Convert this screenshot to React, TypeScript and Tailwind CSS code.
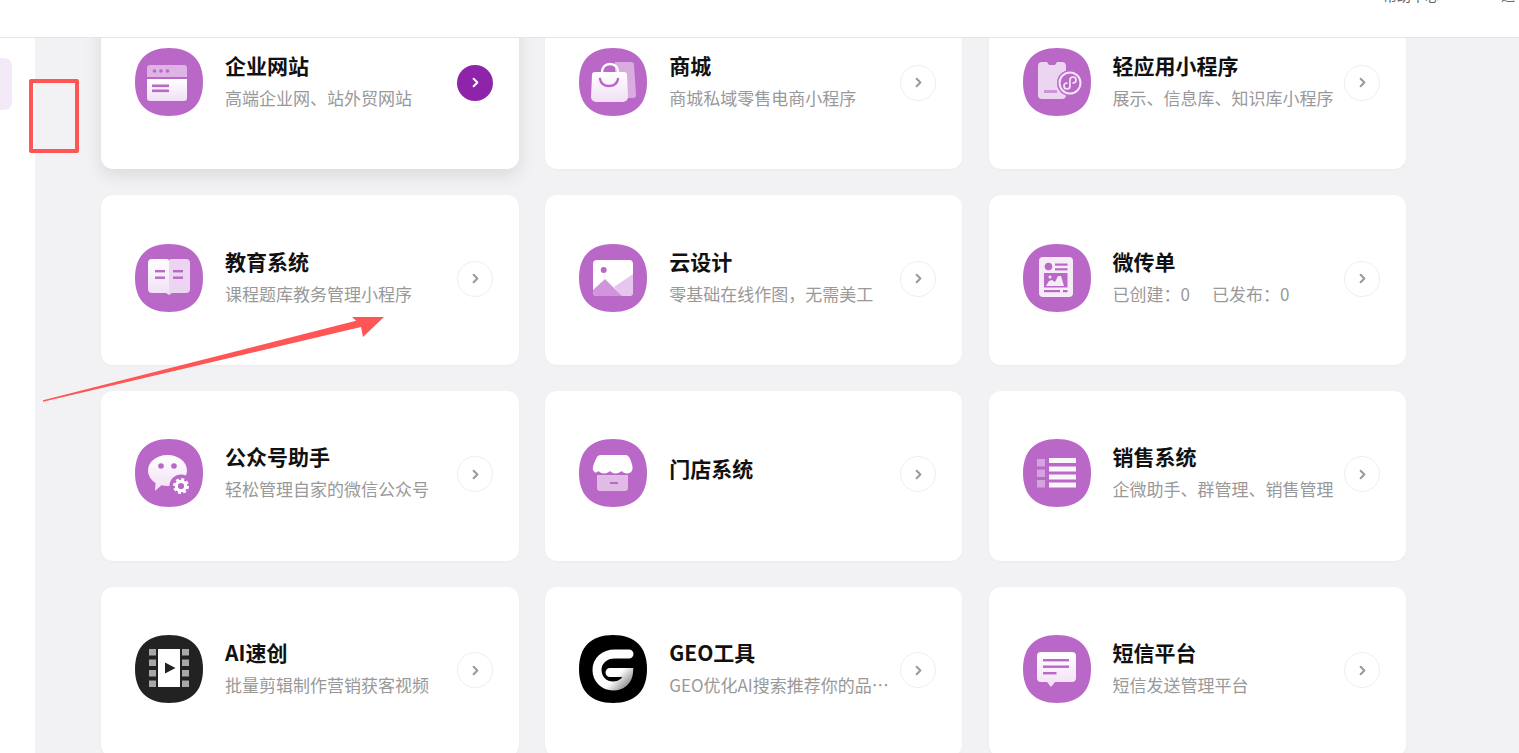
import React, { ReactNode } from "react";
import { ChevronRight } from "lucide-react";

const Squircle = ({ fill = "#ba68c8", children }: { fill?: string; children: ReactNode }) => (
  <svg viewBox="0 0 68 68" className="w-[68px] h-[68px] shrink-0">
    <defs>
      <linearGradient id="pale" x1="0" y1="0" x2="0" y2="1">
        <stop offset="0" stopColor="#ffffff" />
        <stop offset="1" stopColor="#f1dff5" />
      </linearGradient>
    </defs>
    <path d="M34 0C56 0 68 12 68 34C68 56 56 68 34 68C12 68 0 56 0 34C0 12 12 0 34 0Z" fill={fill} />
    {children}
  </svg>
);

const BrowserIcon = () => (
  <Squircle>
    <path d="M12 29V20a3 3 0 0 1 3-3h34a3 3 0 0 1 3 3v9Z" fill="#fff" opacity="0.5" />
    <circle cx="19.5" cy="23" r="1.8" fill="#ba68c8" />
    <circle cx="26" cy="23" r="1.8" fill="#ba68c8" />
    <circle cx="32.5" cy="23" r="1.8" fill="#ba68c8" />
    <path d="M12 31h40v19a3 3 0 0 1-3 3H15a3 3 0 0 1-3-3Z" fill="url(#pale)" />
    <rect x="17" y="36.5" width="17" height="2.6" fill="#ba68c8" />
    <rect x="17" y="41.5" width="17" height="2.6" fill="#ba68c8" />
  </Squircle>
);

const BagIcon = () => (
  <Squircle>
    <path d="M36 14h16a3 3 0 0 1 3 3l2 30a3 3 0 0 1-3 3H36Z" fill="#fff" opacity="0.45" />
    <path d="M23 25c0-6 3-9 8-9s8 3 8 9" fill="none" stroke="#fff" strokeWidth="2.4" />
    <path d="M16 24h29a3 3 0 0 1 3 3l1 22a5 5 0 0 1-5 5H17a5 5 0 0 1-5-5l1-22a3 3 0 0 1 3-3Z" fill="url(#pale)" />
    <path d="M21 31c1 5 5 7 9 7s8-2 9-7" fill="none" stroke="#ba68c8" strokeWidth="2.4" strokeLinecap="round" />
  </Squircle>
);

const PhoneIcon = () => (
  <Squircle>
    <path d="M19 14h5l2 3h6l2-3h5a4 4 0 0 1 4 4v29a4 4 0 0 1-4 4H19a4 4 0 0 1-4-4V18a4 4 0 0 1 4-4Z" fill="#fff" opacity="0.72" />
    <rect x="21" y="42" width="13" height="3" fill="#ba68c8" opacity="0.6" />
    <circle cx="47" cy="35" r="13" fill="#ba68c8" />
    <circle cx="47" cy="35" r="10.5" fill="none" stroke="#f3e6f6" strokeWidth="2" />
    <path d="M47 35v-3a3 3 0 1 1 3 3M47 35v3a3 3 0 1 1-3-3" fill="none" stroke="#f3e6f6" strokeWidth="1.7" strokeLinecap="round" />
  </Squircle>
);

const BookIcon = () => (
  <Squircle>
    <path d="M17 15h15a2 2 0 0 1 2 2v34l-3-2H17a4 4 0 0 1-4-4V19a4 4 0 0 1 4-4Z" fill="url(#pale)" />
    <path d="M51 15H36a2 2 0 0 0-2 2v34l3-2h14a4 4 0 0 0 4-4V19a4 4 0 0 0-4-4Z" fill="#fff" opacity="0.72" />
    <rect x="20" y="26" width="10" height="2.4" fill="#ba68c8" />
    <rect x="20" y="32.5" width="10" height="2.4" fill="#ba68c8" />
    <rect x="38" y="26" width="10" height="2.4" fill="#ba68c8" />
    <rect x="38" y="32.5" width="10" height="2.4" fill="#ba68c8" />
  </Squircle>
);

const ImageIcon = () => (
  <Squircle>
    <rect x="14" y="16" width="40" height="36" rx="4" fill="#fff" />
    <circle cx="24.7" cy="26" r="3" fill="#ba68c8" />
    <path d="M35 43l19-13v18a4 4 0 0 1-4 4H42Z" fill="#e6c6ec" />
    <path d="M14 46l12-11 17 17H18a4 4 0 0 1-4-4Z" fill="#cf96da" />
  </Squircle>
);

const FlyerIcon = () => (
  <Squircle>
    <rect x="16" y="13" width="34" height="40" rx="4" fill="#f6ecf8" />
    <circle cx="25.5" cy="22.5" r="3.8" fill="#ba68c8" />
    <rect x="32" y="19.5" width="12.5" height="2.2" fill="#ba68c8" />
    <rect x="32" y="24.2" width="12.5" height="2.2" fill="#ba68c8" />
    <rect x="21" y="29" width="23.5" height="14.5" fill="#ba68c8" />
    <path d="M23 42l3-5 3-1 3 2 3-6h3l3 10Z" fill="#f6ecf8" />
    <circle cx="27" cy="33" r="1.5" fill="#f6ecf8" />
    <rect x="21" y="46" width="16" height="2.2" fill="#ba68c8" />
    <rect x="40" y="46" width="4.5" height="2.2" fill="#ba68c8" />
  </Squircle>
);

const ChatIcon = () => (
  <Squircle>
    <path d="M32.500 16C43.500 16 52 23 52 31.500C52 40 43.500 47 32.500 47C30.500 47 28.500 46.800 26.500 46.300L20 52L20.500 44C16 41 13 36.500 13 31.500C13 23 21.500 16 32.500 16Z" fill="url(#pale)" />
    <circle cx="26" cy="27" r="2.8" fill="#ba68c8" />
    <circle cx="39" cy="27" r="2.8" fill="#ba68c8" />
    <circle cx="46" cy="47" r="11.500" fill="#ba68c8" />
    <circle cx="46" cy="47" r="4.700" fill="none" stroke="#fff" strokeWidth="3.200" />
    <circle cx="46" cy="47" r="6.800" fill="none" stroke="#fff" strokeWidth="2.400" strokeDasharray="3 2.340" />
  </Squircle>
);

const StoreIcon = () => (
  <Squircle>
    <path d="M18 36h31v13a3 3 0 0 1-3 3H21a3 3 0 0 1-3-3Z" fill="#fff" opacity="0.55" />
    <rect x="31" y="43" width="8" height="2" fill="#ba68c8" />
    <path d="M22 16H46C49 16 50.500 18 51.500 21C52.500 24 54 27 53.500 30C53 33 50.500 34.500 48 34.500C45.500 34.500 44 33.500 42.500 32C41 33.500 39 34.500 36.500 34.500C34 34.500 32.500 33.500 31 32C29.500 33.500 27.500 34.500 25 34.500C22.500 34.500 21 33.500 19.500 32C18 33.500 16.500 34 15.500 33C14 32 13.500 30 14 28C14.500 25 16 22 17 20C18 17.500 19.500 16 22 16Z" fill="#fff" />
  </Squircle>
);

const ListIcon = () => (
  <Squircle>
    <rect x="14" y="20" width="8" height="7.500" fill="#fff" opacity="0.4" />
    <rect x="14" y="30.500" width="8" height="7.500" fill="#fff" opacity="0.4" />
    <rect x="14" y="41" width="8" height="7.500" fill="#fff" opacity="0.4" />
    <rect x="26" y="19" width="27" height="5" fill="#fbf5fc" />
    <rect x="26" y="27.500" width="27" height="5" fill="#fbf5fc" />
    <rect x="26" y="35.500" width="27" height="5" fill="#fbf5fc" />
    <rect x="26" y="43.500" width="27" height="5" fill="#fbf5fc" />
  </Squircle>
);

const FilmIcon = () => (
  <Squircle fill="#222222">
    <rect x="23" y="14" width="22" height="38" fill="#fff" />
    <path d="M30 27.500l10.500 5.500-10.500 5.500Z" fill="#222222" />
    {[14, 24.500, 35, 45.500].map((y) => (
      <React.Fragment key={y}>
        <rect x="14" y={y} width="7" height="6.500" fill="#a8a8a8" />
        <rect x="47" y={y} width="7" height="6.500" fill="#a8a8a8" />
      </React.Fragment>
    ))}
  </Squircle>
);

const GeoIcon = () => (
  <Squircle fill="#000000">
    <defs>
      <linearGradient id="geo" x1="0" y1="0" x2="1" y2="1">
        <stop offset="0" stopColor="#ffffff" />
        <stop offset="0.65" stopColor="#ffffff" />
        <stop offset="1" stopColor="#8a8a8a" />
      </linearGradient>
    </defs>
    <path d="M50 19H36C25 19 18 26 18 35C18 44 25 51 34 51C43 51 49 45 49.500 37.500H31" fill="none" stroke="url(#geo)" strokeWidth="9" strokeLinecap="round" />
  </Squircle>
);

const MessageIcon = () => (
  <Squircle>
    <path d="M18 17h31a4 4 0 0 1 4 4v22a4 4 0 0 1-4 4H32l-4 5-4-5h-6a4 4 0 0 1-4-4V21a4 4 0 0 1 4-4Z" fill="url(#pale)" />
    <rect x="20" y="24" width="26" height="2.400" fill="#ba68c8" />
    <rect x="20" y="30.500" width="26" height="2.400" fill="#ba68c8" />
    <rect x="20" y="37" width="13.500" height="2.400" fill="#ba68c8" />
  </Squircle>
);

const ProductCard = ({
  icon,
  title,
  desc,
  active,
}: {
  icon: ReactNode;
  title: string;
  desc?: ReactNode;
  active?: boolean;
}) => {
  return (
    <div
      className={
        active
          ? "flex h-[170px] rounded-xl bg-white pt-[48.4px] pl-[34px] pr-[26px] shadow-[0_6px_18px_rgba(0,0,0,0.1)]"
          : "flex h-[170px] rounded-xl bg-white pt-[48.4px] pl-[34px] pr-[26px] shadow-[0_1px_3px_rgba(0,0,0,0.03)]"
      }
    >
      {icon}
      <div className={desc ? "ml-[22px] min-w-0 flex-1 pt-px" : "ml-[22px] min-w-0 flex-1 pt-[13px]"}>
        <h4 className="text-[21px] font-bold leading-[32px] text-[#111111]">{title}</h4>
        {desc && <p className="mt-px w-[221px] truncate text-[17px] leading-[32px] text-[#999999]">{desc}</p>}
      </div>
      <div
        className={
          active
            ? "mt-[17px] flex h-9 w-9 shrink-0 items-center justify-center rounded-full bg-[#8e24aa] pl-px text-white"
            : "mt-[17px] flex h-9 w-9 shrink-0 items-center justify-center rounded-full border border-[#eeeeee] bg-white pl-px text-[#999999]"
        }
      >
        <ChevronRight size={15} strokeWidth={3.2} />
      </div>
    </div>
  );
};

export default function App() {
  return (
    <div className="relative flex h-screen flex-col overflow-hidden bg-[#f2f2f5] font-['Noto_Sans_CJK_SC','Liberation_Sans',sans-serif]">
      <header className="relative z-10 flex h-[38px] shrink-0 items-start justify-end gap-[62px] overflow-hidden border-b border-[#e6e6e6] bg-white pr-[4px]">
        <span className="-mt-[14px] text-sm leading-[18px] text-[#666666]">帮助中心</span>
        <span className="-mt-[14px] w-[14px] text-sm leading-[18px] text-[#666666]">退</span>
      </header>

      <div className="flex min-h-0 flex-1">
        <aside className="w-[35px] shrink-0 bg-white pt-5">
          <div className="h-[52px] w-3 rounded-r-lg bg-[#f3e9f7]" />
        </aside>
        <main className="flex-1 pl-[66px]">
          <div className="-mt-[38.6px] grid w-[1305px] grid-cols-[417.8px_417px_417.4px] gap-x-[26.4px] gap-y-[25.8px]">
            <ProductCard active icon={<BrowserIcon />} title="企业网站" desc="高端企业网、站外贸网站" />
            <ProductCard icon={<BagIcon />} title="商城" desc="商城私域零售电商小程序" />
            <ProductCard icon={<PhoneIcon />} title="轻应用小程序" desc="展示、信息库、知识库小程序" />
            <ProductCard icon={<BookIcon />} title="教育系统" desc="课程题库教务管理小程序" />
            <ProductCard icon={<ImageIcon />} title="云设计" desc="零基础在线作图，无需美工" />
            <ProductCard
              icon={<FlyerIcon />}
              title="微传单"
              desc={
                <>
                  已创建：0<span className="ml-[22px]">已发布：0</span>
                </>
              }
            />
            <ProductCard icon={<ChatIcon />} title="公众号助手" desc="轻松管理自家的微信公众号" />
            <ProductCard icon={<StoreIcon />} title="门店系统" />
            <ProductCard icon={<ListIcon />} title="销售系统" desc="企微助手、群管理、销售管理" />
            <ProductCard icon={<FilmIcon />} title="AI速创" desc="批量剪辑制作营销获客视频" />
            <ProductCard icon={<GeoIcon />} title="GEO工具" desc="GEO优化AI搜索推荐你的品牌曝光" />
            <ProductCard icon={<MessageIcon />} title="短信平台" desc="短信发送管理平台" />
          </div>
        </main>
      </div>

      {/* annotations drawn over the page */}
      <div className="absolute left-[29px] top-[79px] z-20 h-[74px] w-[50px] rounded-[2px] border-4 border-[#ff5555]" />
      <svg className="pointer-events-none absolute left-0 top-0 z-20 h-[753px] w-[1519px]" viewBox="0 0 1519 753">
        <path d="M43 400.300L356 320.700L352 317L384 317L363 337L361 327L43 401.700Z" fill="#ff5555" />
      </svg>
    </div>
  );
}
